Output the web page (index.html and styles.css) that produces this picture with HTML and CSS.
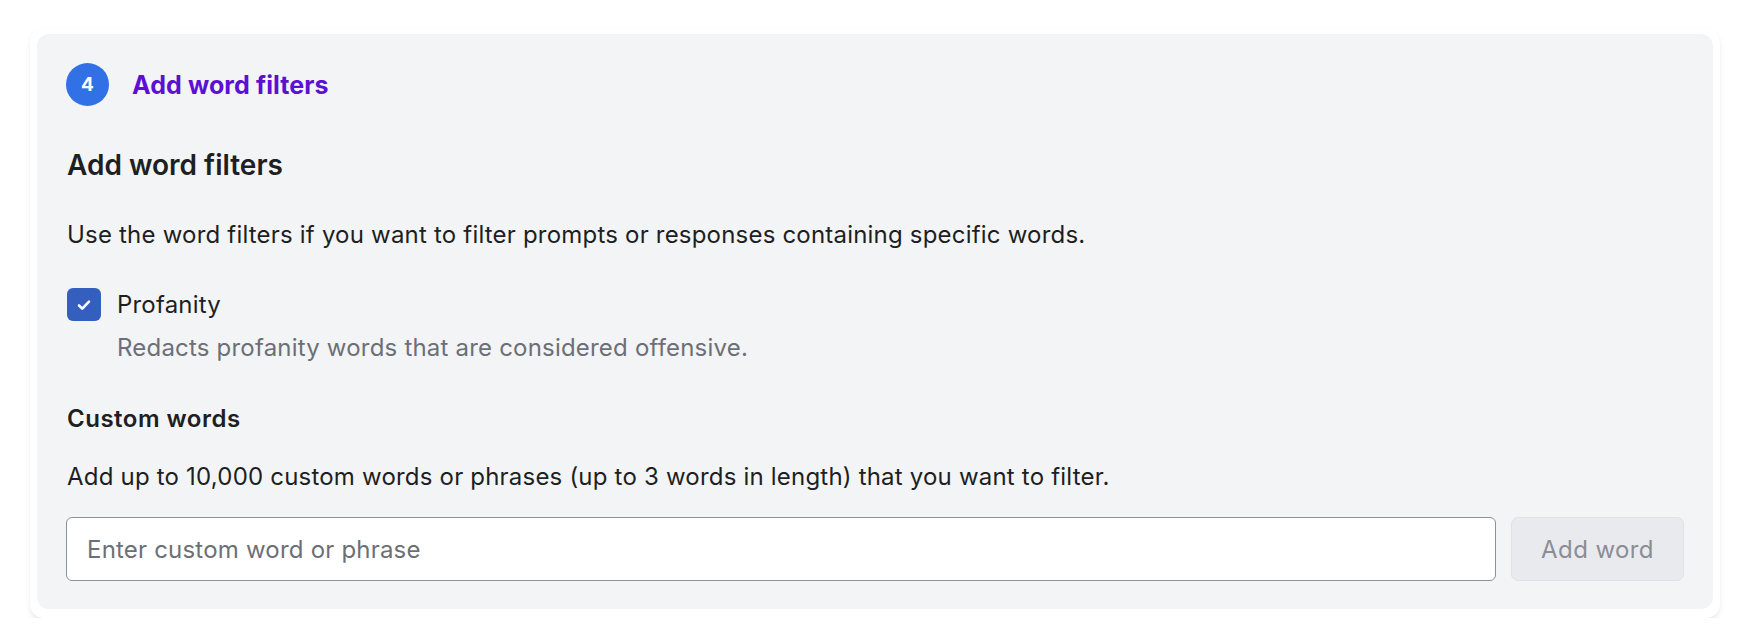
FILE: index.html
```html
<!DOCTYPE html>
<html lang="en">
<head>
<meta charset="utf-8">
<title>Add word filters</title>
<link rel="stylesheet" href="styles.css">
</head>
<body>
<div class="frame">
  <section class="panel">
    <header class="step">
      <span class="step-num">4</span>
      <span class="step-title">Add word filters</span>
    </header>
    <h2 class="heading">Add word filters</h2>
    <p class="text text-first">Use the word filters if you want to filter prompts or responses containing specific words.</p>
    <div class="check-row">
      <span class="checkbox">
        <svg width="20" height="20" viewBox="0 0 16 16"><path d="M4 8.4l2.6 2.5 5.4-5.6" fill="none" stroke="#fff" stroke-width="2.1" stroke-linecap="round" stroke-linejoin="round"/></svg>
      </span>
      <div class="check-text">
        <div class="check-label">Profanity</div>
        <div class="check-desc">Redacts profanity words that are considered offensive.</div>
      </div>
    </div>
    <h3 class="subheading">Custom words</h3>
    <p class="text text-second">Add up to 10,000 custom words or phrases (up to 3 words in length) that you want to filter.</p>
    <div class="input-row">
      <input class="field" type="text" placeholder="Enter custom word or phrase">
      <button class="btn" disabled>Add word</button>
    </div>
  </section>
</div>
</body>
</html>
```
FILE: styles.css
```css
* { box-sizing: border-box; }
html, body { margin: 0; background: #ffffff; }
body {
  font-family: "Inter", "Noto Sans", sans-serif;
  color: #1d1f23;
  padding: 28px 30px 0 30px;
}
.frame {
  width: 1690px;
  background: #ffffff;
  border-radius: 14px;
  padding: 6px 7px 9px 7px;
  box-shadow: 0 4px 6px -1px rgba(0,0,0,0.10), 0 0 1px rgba(0,0,0,0.04);
}
.panel {
  background: #f3f4f6;
  border-radius: 12px;
  padding: 29px 29px 28px 29px;
}
.step {
  display: flex;
  align-items: center;
  gap: 23px;
}
.step-num {
  width: 43px;
  height: 43px;
  border-radius: 50%;
  background: #3270e6;
  color: #fff;
  font-weight: 700;
  font-size: 19px;
  display: flex;
  align-items: center;
  justify-content: center;
}
.step-title {
  color: #5b10d3;
  font-weight: 700;
  font-size: 25px;
  letter-spacing: 0.1px;
}
.heading {
  margin: 42px 0 0 1px;
  font-size: 28px;
  font-weight: 600;
  line-height: 34px;
}
.text {
  margin: 0 0 0 1px;
  font-size: 24px;
  letter-spacing: 0.2px;
  line-height: 32px;
}
.text-first { margin-top: 37px; }
.text-second { margin-top: 26px; }
.check-row {
  display: flex;
  gap: 16px;
  margin-top: 37px;
  margin-left: 1px;
}
.checkbox {
  width: 34px;
  height: 33px;
  border-radius: 6px;
  background: #345fbf;
  display: flex;
  align-items: center;
  justify-content: center;
  flex: none;
}
.check-label {
  font-size: 24px;
  letter-spacing: 0.2px;
  line-height: 33px;
}
.check-desc {
  font-size: 24px;
  letter-spacing: 0.2px;
  line-height: 32px;
  color: #6c6f76;
  margin-top: 11px;
}
.subheading {
  margin: 39px 0 0 1px;
  font-size: 24px;
  font-weight: 600;
  letter-spacing: 0.5px;
  line-height: 32px;
}
.input-row {
  display: flex;
  gap: 15px;
  margin-top: 24px;
}
.field {
  flex: 1;
  height: 64px;
  border: 1px solid #8f9197;
  border-radius: 6px;
  background: #fff;
  padding: 0 20px;
  font-family: inherit;
  font-size: 24px;
  letter-spacing: 0.2px;
  color: #1d1f23;
}
.field::placeholder { color: #6c6f76; }
.btn {
  width: 173px;
  height: 64px;
  border: 1px solid #e0e2e6;
  border-radius: 7px;
  background: #e9eaee;
  color: #8b8d94;
  font-family: inherit;
  font-size: 24px;
  letter-spacing: 0.4px;
}
```
